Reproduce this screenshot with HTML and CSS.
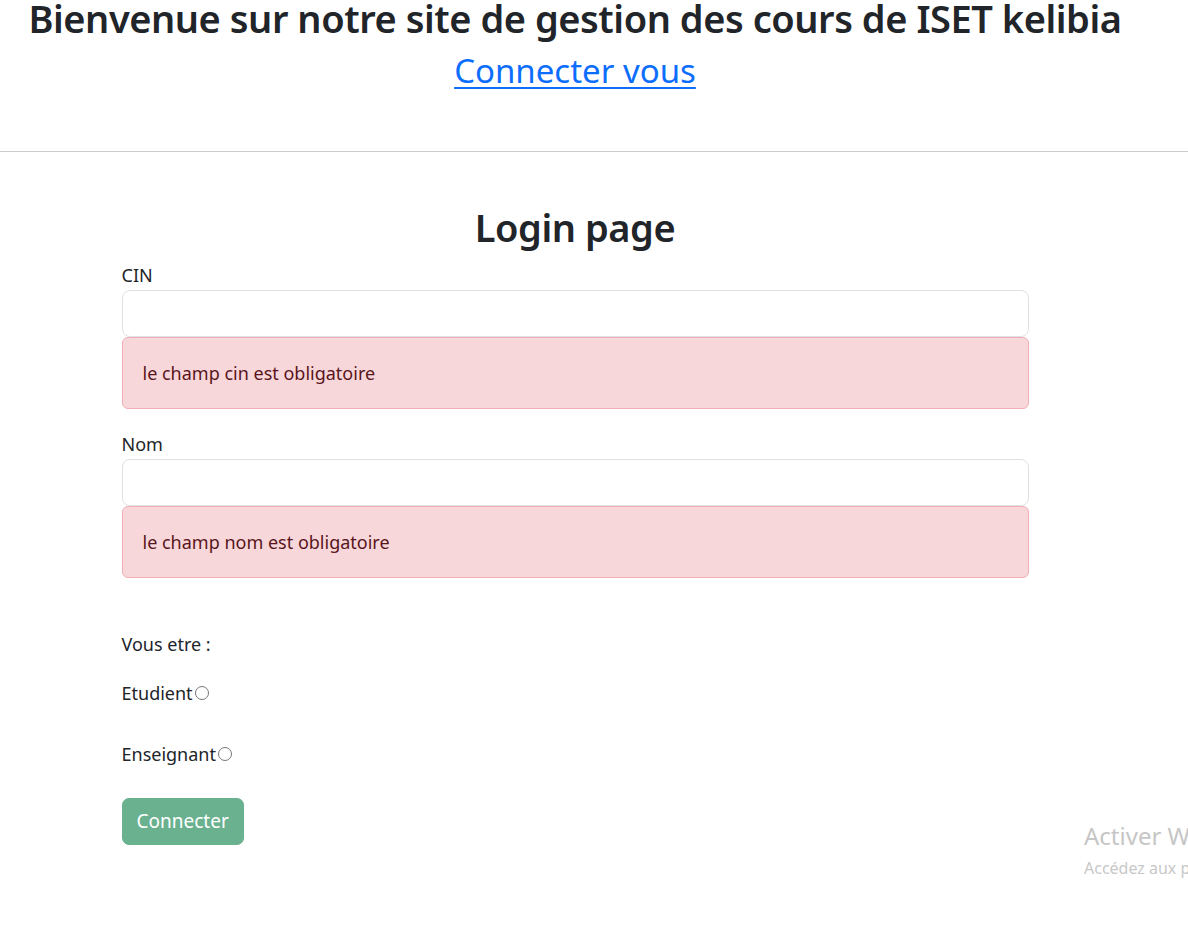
FILE: index.html
```html
<!DOCTYPE html>
<html lang="fr">
<head>
<meta charset="utf-8">
<title>Login</title>
<link rel="stylesheet" href="styles.css">
</head>
<body>
<header class="page">
  <h1 class="title">Bienvenue sur notre site de gestion des cours de ISET kelibia</h1>
  <div class="connect"><a href="#">Connecter vous</a></div>
</header>
<div class="rule"></div>
<main class="page">
  <h1 class="login-title">Login page</h1>
  <form class="form">
    <label class="label first" for="cin">CIN</label>
    <input class="control" id="cin" type="text">
    <div class="alert">le champ cin est obligatoire</div>

    <label class="label" for="nom">Nom</label>
    <input class="control" id="nom" type="text">
    <div class="alert">le champ nom est obligatoire</div>

    <p class="line vous">Vous etre :</p>
    <p class="line etud">Etudient<input class="radio" type="radio" name="type"></p>
    <p class="line ens">Enseignant<input class="radio" type="radio" name="type"></p>

    <button class="btn" type="button">Connecter</button>
  </form>
</main>
<div class="watermark">
  <div class="wm-title">Activer Windows</div>
  <div class="wm-sub">Accédez aux paramètres pour activer Windows.</div>
</div>
</body>
</html>
```
FILE: styles.css
```css
html, body {
  margin: 0;
  padding: 0;
  overflow: hidden;
  background: #fff;
}
body {
  font-family: "Noto Sans", "Open Sans", sans-serif;
  font-size: 18px;
  line-height: 27px;
  color: #212529;
}
.page {
  width: 1150px;
}
.title {
  margin: 0;
  padding-top: 1px;
  font-size: 38px;
  font-weight: 600;
  letter-spacing: -0.45px;
  line-height: 35px;
  text-align: center;
  white-space: nowrap;
}
.connect {
  margin-top: 15px;
  text-align: center;
  font-size: 33px;
  line-height: 40px;
}
.connect a {
  color: #0d6efd;
  text-decoration: underline;
  text-decoration-thickness: 2px;
  text-underline-offset: 4px;
}
.rule {
  margin-top: 60px;
  height: 1px;
  background: #cacbcc;
}
.login-title {
  margin: 52px 0 0;
  font-size: 38px;
  font-weight: 600;
  letter-spacing: -0.45px;
  line-height: 46px;
  text-align: center;
}
.form {
  width: 907px;
  margin: 0 auto;
  display: flex;
  flex-direction: column;
  align-items: flex-start;
}
.label {
  display: block;
  margin: 22px 0 1px;
}
.label.first {
  margin-top: 12px;
}
.control {
  box-sizing: border-box;
  width: 100%;
  height: 47px;
  margin: 0;
  border: 1px solid #dee2e6;
  border-radius: 8px;
  background: #fff;
  font: inherit;
  padding: 0 16px;
}
.alert {
  box-sizing: border-box;
  width: 100%;
  height: 72px;
  display: flex;
  align-items: center;
  padding: 0 20px;
  background: #f8d7da;
  border: 1px solid #f1aeb5;
  border-radius: 6px;
  color: #58151c;
}
.line {
  margin: 0;
}
.vous { margin-top: 53px; }
.etud { margin-top: 22px; }
.ens { margin-top: 34px; }
.radio {
  appearance: none;
  -webkit-appearance: none;
  display: inline-block;
  box-sizing: border-box;
  width: 14px;
  height: 14px;
  margin: 0 0 0 2px;
  border: 1px solid #767676;
  border-radius: 50%;
  background: #fff;
  vertical-align: baseline;
}
.btn {
  margin-top: 30px;
  box-sizing: border-box;
  height: 47px;
  padding: 0 14px;
  border: 1px solid #6ab190;
  border-radius: 7px;
  background: #6ab190;
  color: #fff;
  font: inherit;
  font-size: 19px;
  line-height: 27px;
}
.watermark {
  position: absolute;
  left: 1084px;
  right: 0;
  top: 821px;
  overflow: hidden;
  white-space: nowrap;
  color: #c6c6c6;
}
.wm-title {
  font-size: 24px;
  line-height: 30px;
}
.wm-sub {
  margin-top: 7px;
  font-size: 16px;
  line-height: 20px;
  color: #c8c8c8;
}
```
